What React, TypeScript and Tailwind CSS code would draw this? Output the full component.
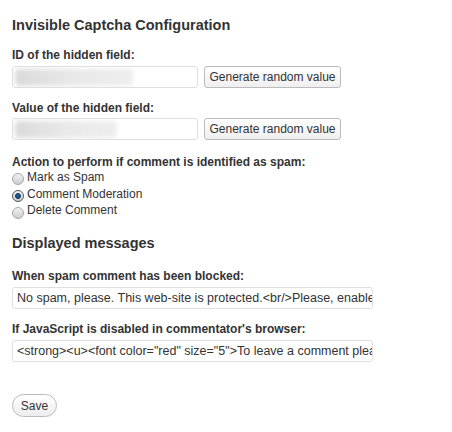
import type { ReactNode } from 'react'

const font = "font-['Liberation_Sans',Arial,sans-serif]"

function Label({ children, className = '' }: { children: ReactNode; className?: string }) {
  return <p className={`text-[12px] font-bold leading-[16px] text-[#333] ${className}`}>{children}</p>
}

function SecretField({ smudge }: { smudge: string }) {
  return (
    <div className="flex mt-[3px]">
      <div className="w-[186px] h-[22px] border border-[#dfdfdf] rounded-[3px] bg-white overflow-hidden flex items-center px-[2px]">
        <div className={`h-[17px] ${smudge} rounded-[4px] bg-gradient-to-r from-[#dadada] via-[#e9e9e9] to-[#eeeeee] blur-[2px]`} />
      </div>
      <button className="ml-[6px] w-[137px] h-[22px] border border-[#bbb] rounded-[3px] bg-gradient-to-b from-white to-[#efefef] text-[12px] text-[#333] leading-none">
        Generate random value
      </button>
    </div>
  )
}

function Radio({ label, checked = false }: { label: string; checked?: boolean }) {
  return (
    <label className="flex items-center leading-[16.7px] text-[12px] text-[#333]">
      <span
        className={`w-[12px] h-[12px] rounded-full border translate-y-[2px] flex items-center justify-center mr-[3px] ${
          checked
            ? 'border-[#555] bg-gradient-to-b from-[#f5f5f5] to-[#cfcfcf]'
            : 'border-[#a8a8a8] bg-gradient-to-b from-[#f2f2f2] to-[#cdcdcd]'
        }`}
      >
        {checked && <span className="w-[6px] h-[6px] rounded-full bg-[#1d5c91] border border-[#0e3358]" />}
      </span>
      {label}
    </label>
  )
}

function TextField({ value }: { value: string }) {
  return (
    <input
      readOnly
      value={value}
      className={`block mt-[3px] w-[361px] h-[22px] border border-[#dfdfdf] rounded-[3px] bg-white pl-[4px] pr-0 text-[12.5px] text-[#333] outline-none ${font}`}
    />
  )
}

export default function App() {
  return (
    <div className={`min-h-screen bg-white pl-[12px] pt-[15px] ${font}`}>
      <h3 className="text-[14.5px] font-bold leading-[20px] text-[#333]">Invisible Captcha Configuration</h3>

      <Label className="mt-[12px]">ID of the hidden field:</Label>
      <SecretField smudge="w-[118px]" />

      <Label className="mt-[12px]">Value of the hidden field:</Label>
      <div className="-mt-[1px]">
        <SecretField smudge="w-[102px]" />
      </div>

      <p className="mt-[16px] text-[12px] font-bold leading-[13px] text-[#333]">
        Action to perform if comment is identified as spam:
      </p>
      <div className="flex flex-col">
        <Radio label="Mark as Spam" />
        <Radio label="Comment Moderation" checked />
        <Radio label="Delete Comment" />
      </div>

      <h3 className="mt-[14px] text-[14.5px] font-bold leading-[20px] text-[#333]">Displayed messages</h3>

      <Label className="mt-[15px]">When spam comment has been blocked:</Label>
      <TextField value="No spam, please. This web-site is protected.<br/>Please, enable JavaScript in your browser." />

      <Label className="mt-[12px]">If JavaScript is disabled in commentator's browser:</Label>
      <TextField value={'<strong><u><font color="red" size="5">To leave a comment please enable JavaScript</font></u></strong>'} />

      <button className="mt-[32px] w-[45px] h-[23px] rounded-full border border-[#bbb] bg-gradient-to-b from-white to-[#ededed] text-[12px] text-[#333] leading-none">
        Save
      </button>
    </div>
  )
}
